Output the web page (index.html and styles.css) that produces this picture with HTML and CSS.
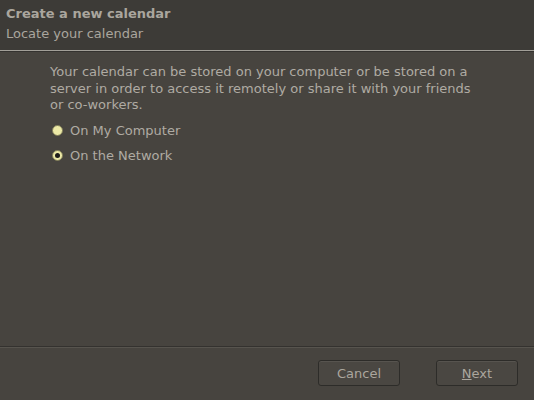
FILE: index.html
```html
<!DOCTYPE html>
<html>
<head>
<meta charset="utf-8">
<link rel="stylesheet" href="styles.css">
</head>
<body>
<div class="dialog">
  <header class="head">
    <div class="title">Create a new calendar</div>
    <div class="subtitle">Locate your calendar</div>
  </header>
  <main class="content">
    <p class="desc">Your calendar can be stored on your computer or be stored on a server in order to access it remotely or share it with your friends or co-workers.</p>
    <div class="options">
      <label class="opt"><span class="radio"></span>On My Computer</label>
      <label class="opt"><span class="radio checked"></span>On the Network</label>
    </div>
  </main>
  <footer class="foot">
    <button class="btn">Cancel</button>
    <button class="btn"><u>N</u>ext</button>
  </footer>
</div>
</body>
</html>
```
FILE: styles.css
```css
html, body {
  margin: 0;
  padding: 0;
  height: 100%;
}
body {
  background: #47443f;
  font-family: "DejaVu Sans", sans-serif;
  color: #b3afa7;
}
.dialog {
  display: flex;
  flex-direction: column;
  height: 400px;
  width: 534px;
}
.head {
  background: #3d3b37;
  padding: 5px 6px 0 6px;
  height: 51px;
  box-sizing: border-box;
  border-bottom: 1px solid #a29f98;
}
.title {
  font-weight: bold;
  font-size: 13px;
  color: #aaa69e;
  line-height: 18px;
}
.subtitle {
  font-size: 13px;
  color: #aaa69e;
  line-height: 22px;
}
.content {
  flex: 1;
  padding: 12px 50px 0 50px;
  border-top: 1px solid #34322f;
}
.desc {
  margin: 0;
  font-size: 13px;
  line-height: 16.5px;
  color: #afaba3;
  width: 430px;
}
.options {
  display: flex;
  flex-direction: column;
  gap: 7px;
  margin-top: 8px;
}
.opt {
  display: flex;
  align-items: center;
  gap: 7px;
  font-size: 13px;
  line-height: 18px;
  color: #afaba3;
}
.radio {
  width: 11px;
  height: 11px;
  border-radius: 50%;
  background: #ece9a6;
  border: 1px solid #7f7c58;
  box-sizing: border-box;
  margin-left: 2px;
  position: relative;
}
.radio.checked::after {
  content: "";
  position: absolute;
  left: 2px;
  top: 2px;
  width: 5px;
  height: 5px;
  border-radius: 50%;
  background: #1d1c1a;
}
.foot {
  height: 54px;
  box-sizing: border-box;
  border-top: 1px solid #34322f;
  box-shadow: inset 0 1px 0 #57544e;
  display: flex;
  justify-content: flex-end;
  align-items: flex-start;
  gap: 36px;
  padding: 13px 16px 0 0;
}
.btn {
  width: 82px;
  height: 26px;
  background: #4a4742;
  border: 1px solid #2d2c29;
  border-radius: 3px;
  box-shadow: inset 0 1px 0 #57544f;
  color: #aaa69e;
  font-family: "DejaVu Sans", sans-serif;
  font-size: 13px;
  padding: 0;
}
```
